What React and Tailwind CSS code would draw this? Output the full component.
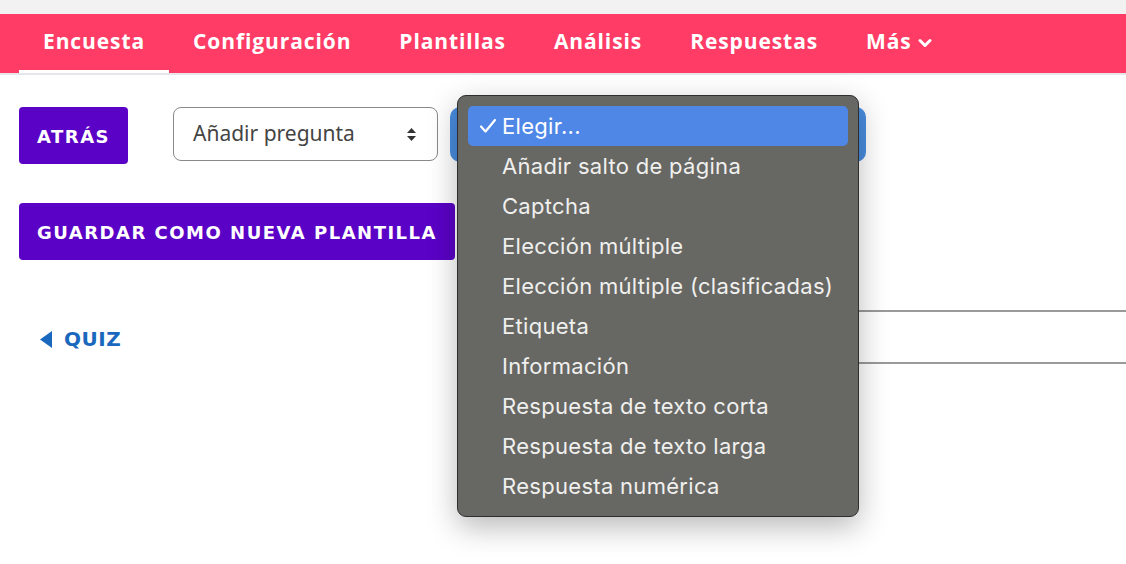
import React from "react";

const navItems = ["Encuesta", "Configuración", "Plantillas", "Análisis", "Respuestas"];
const options = [
  "Añadir salto de página",
  "Captcha",
  "Elección múltiple",
  "Elección múltiple (clasificadas)",
  "Etiqueta",
  "Información",
  "Respuesta de texto corta",
  "Respuesta de texto larga",
  "Respuesta numérica",
];

export default function App() {
  return (
    <div className="relative w-[1126px] h-[564px] overflow-hidden bg-white" style={{ fontFamily: '"Noto Sans", sans-serif' }}>
      <div className="h-[14px] bg-[#f2f2f2]" />
      <nav className="h-[61px] bg-[#fe3c66] border-b-2 border-[#e6e6ea] flex items-stretch pl-[19px]">
        {navItems.map((t, i) => (
          <div
            key={t}
            className={`flex items-center px-[24px] text-[21px] font-bold text-white tracking-[0.9px] ${i === 0 ? "border-b-[3px] border-white" : "pb-[3px]"}`}
            style={{ fontFamily: '"Open Sans", sans-serif' }}
          >
            <span className="-mt-[1px]">{t}</span>
          </div>
        ))}
        <div className="flex items-center px-[24px] pb-[3px] text-[21px] font-bold text-white tracking-[0.9px] gap-[6px]" style={{ fontFamily: '"Open Sans", sans-serif' }}>
          <span className="-mt-[1px]">Más</span>
          <svg width="14" height="10" viewBox="0 0 14 10" className="mt-[1px]">
            <path d="M2 2.5 L7 7.5 L12 2.5" stroke="white" strokeWidth="3" fill="none" strokeLinecap="round" strokeLinejoin="round" />
          </svg>
        </div>
      </nav>

      <div className="pl-[19px] pt-[32px]">
        <div className="flex items-start">
          <button className="w-[109px] h-[57px] rounded-[4px] bg-[#5a02c6] text-white text-[18px] font-bold tracking-[1.5px] pt-[1px]" style={{ fontFamily: '"DejaVu Sans", sans-serif' }}>
            ATRÁS
          </button>
          <div className="ml-[45px] w-[265px] h-[54px] rounded-[8px] border border-[#8a8a8a] flex items-center justify-between pl-[19px] pr-[20px] text-[21px] text-[#444]">
            <span>Añadir pregunta</span>
            <svg width="11" height="16" viewBox="0 0 11 16">
              <path d="M5.5 2 L10 7 H1 Z" fill="#333" />
              <path d="M5.5 15 L10 10 H1 Z" fill="#333" />
            </svg>
          </div>
          <div className="ml-[12px] w-[416px] h-[55px] rounded-[10px] bg-[#4a8de0]" />
        </div>

        <button className="mt-[39px] w-[436px] h-[57px] rounded-[4px] bg-[#5a02c6] text-white text-[18px] font-bold tracking-[1.5px] pt-[1px]" style={{ fontFamily: '"DejaVu Sans", sans-serif' }}>
          GUARDAR COMO NUEVA PLANTILLA
        </button>

        <div className="mt-[50px] flex items-start">
          <div className="w-[450px] pt-[14px] pl-[21px] flex items-center gap-[12px] text-[#1a68bd] font-bold text-[20px] tracking-[0.5px]" style={{ fontFamily: '"DejaVu Sans", sans-serif' }}>
            <svg width="12" height="17" viewBox="0 0 12 17">
              <path d="M12 0 V17 L0 8.5 Z" fill="#1a68bd" />
            </svg>
            <span>QUIZ</span>
          </div>
          <div className="flex-1 h-[54px] border-y-2 border-[#9a9a9a]" />
        </div>
      </div>

      <div
        className="absolute left-[457px] top-[95px] w-[402px] h-[422px] rounded-[9px] bg-[#676764] border border-[#2e2e2e] shadow-[0_10px_30px_rgba(0,0,0,0.28)] px-[10px] pt-[10px]"
        style={{ fontFamily: 'Inter, "Noto Sans", sans-serif' }}
      >
        <div className="h-[40px] rounded-[5px] bg-[#4f87e7] flex items-center text-white text-[22px] tracking-[0.3px]">
          <span className="w-[34px] flex justify-end pr-[5px]">
            <svg width="18" height="16" viewBox="0 0 18 16">
              <path d="M2 8.5 L6.5 13.5 L16 2" stroke="white" strokeWidth="2.2" fill="none" strokeLinecap="round" strokeLinejoin="round" />
            </svg>
          </span>
          <span>Elegir...</span>
        </div>
        {options.map((o) => (
          <div key={o} className="h-[40px] flex items-center pl-[34px] text-[22px] tracking-[0.3px] text-[#f0f0ee]">
            {o}
          </div>
        ))}
      </div>
    </div>
  );
}
